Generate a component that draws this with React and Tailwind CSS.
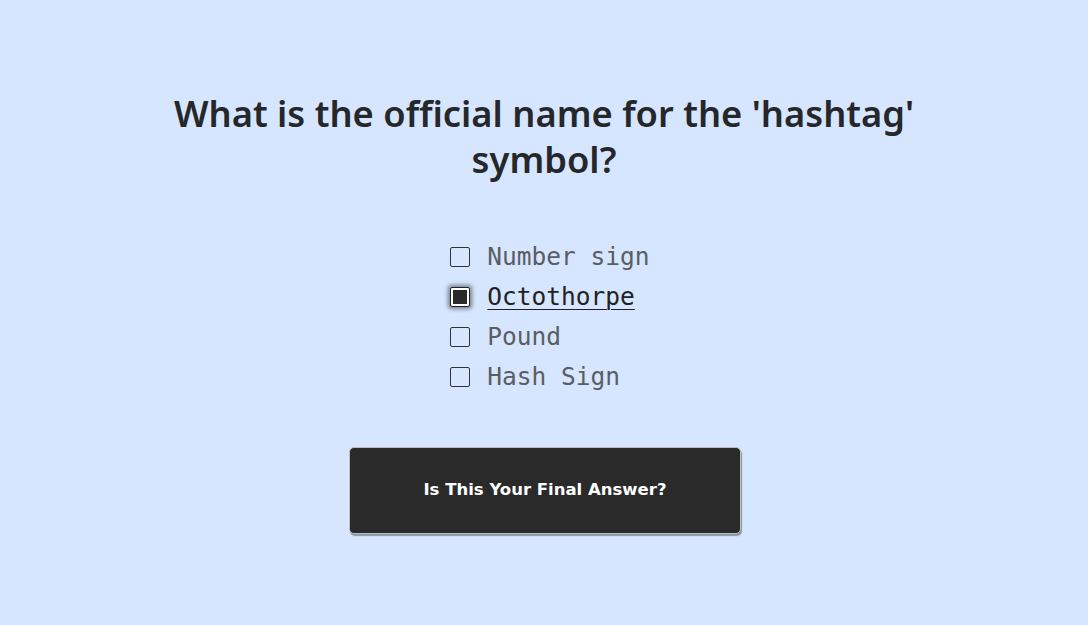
import React from "react";

const options = ["Number sign", "Octothorpe", "Pound", "Hash Sign"];

export default function App() {
  const selected = 1;
  return (
    <div className="min-h-[625px] w-full bg-[#d6e6ff] flex flex-col items-center pt-[90px]">
      <h1
        className="w-[800px] text-center text-[36.3px] leading-[46px] font-semibold text-[#26272b]"
        style={{ fontFamily: '"Noto Sans", "Open Sans", sans-serif' }}
      >
        What is the official name for the 'hashtag' symbol?
      </h1>
      <div className="mt-[63px] flex flex-col gap-[16px] pl-[12px]">
        {options.map((o, i) => (
          <label key={o} className="flex items-center gap-[17px] h-[24px]">
            {i === selected ? (
              <span className="w-[20px] h-[20px] rounded-[2px] border border-[#222] bg-white p-[2px] shadow-[0_0_4px_2px_rgba(0,0,0,0.45)] flex">
                <span className="flex-1 bg-[#2a2a2a]" />
              </span>
            ) : (
              <span className="w-[20px] h-[20px] rounded-[2px] border border-[#333] bg-transparent" />
            )}
            <span
              className={
                "text-[24.5px] leading-[24px] " +
                (i === selected ? "text-[#222] underline underline-offset-[4px] decoration-1" : "text-[#5a5d63]")
              }
              style={{ fontFamily: '"DejaVu Sans Mono", "Liberation Mono", monospace' }}
            >
              {o}
            </span>
          </label>
        ))}
      </div>
      <button
        className="mt-[58px] ml-[2px] w-[392px] h-[87px] rounded-[5px] bg-[#2a2a2a] border border-[#bdbdbd] shadow-[1px_2px_1px_rgba(0,0,0,0.35)] text-white text-[16.5px] font-bold"
        style={{ fontFamily: '"DejaVu Sans", Verdana, sans-serif' }}
      >
        Is This Your Final Answer?
      </button>
    </div>
  );
}
